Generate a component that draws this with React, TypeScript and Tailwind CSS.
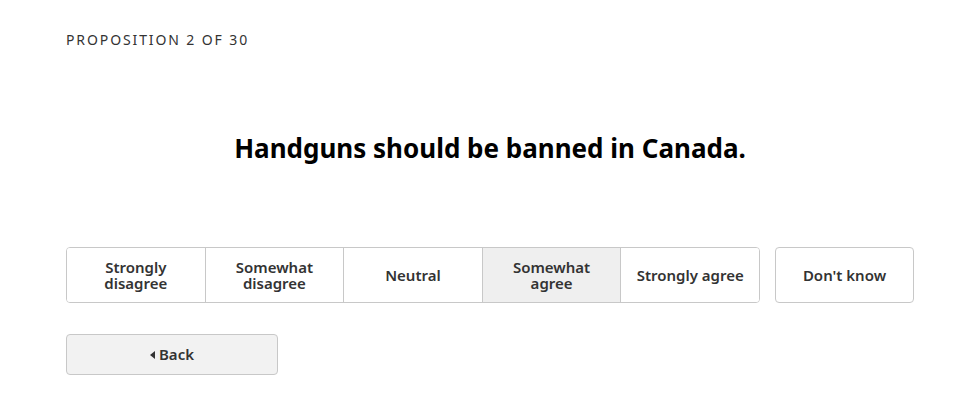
import React from "react";

const options = [
  "Strongly disagree",
  "Somewhat disagree",
  "Neutral",
  "Somewhat agree",
  "Strongly agree",
];

export default function App() {
  return (
    <div
      className="w-[980px] h-[400px] bg-white text-[#222]"
      style={{ fontFamily: '"Noto Sans", "Open Sans", sans-serif' }}
    >
      <div className="px-[66px] pt-[31px]">
        <div className="text-[14px] leading-[18px] tracking-[0.135em] text-[#333]">
          PROPOSITION 2 OF 30
        </div>
        <h1 className="mt-[81px] text-center text-[26px] leading-[36px] font-bold text-black">
          Handguns should be banned in Canada.
        </h1>
        <div className="mt-[81px] flex gap-[15px]">
          <div className="flex w-[694px] rounded-[4px] border border-[#c8c8c8] overflow-hidden">
            {options.map((o, i) => (
              <button
                key={o}
                className={
                  "flex-1 h-[54px] flex items-center justify-center px-2 text-[15px] leading-[16px] font-semibold text-[#333] " +
                  (i > 0 ? "border-l border-[#c8c8c8] " : "") +
                  (i === 3 ? "bg-[#efefef] text-[#111]" : "bg-white")
                }
              >
                <span className="max-w-[110px] text-center">{o}</span>
              </button>
            ))}
          </div>
          <button className="w-[139px] h-[56px] rounded-[4px] border border-[#c8c8c8] bg-white text-[15px] font-semibold text-[#333]">
            Don't know
          </button>
        </div>
        <button className="mt-[31px] w-[212px] h-[41px] rounded-[4px] border border-[#c8c8c8] bg-[#f2f2f2] flex items-center justify-center gap-[3px] text-[15px] font-semibold text-[#333]">
          <svg width="6" height="8" viewBox="0 0 6 8">
            <path d="M5 0 L0 4 L5 8 Z" fill="#333" />
          </svg>
          Back
        </button>
      </div>
    </div>
  );
}
